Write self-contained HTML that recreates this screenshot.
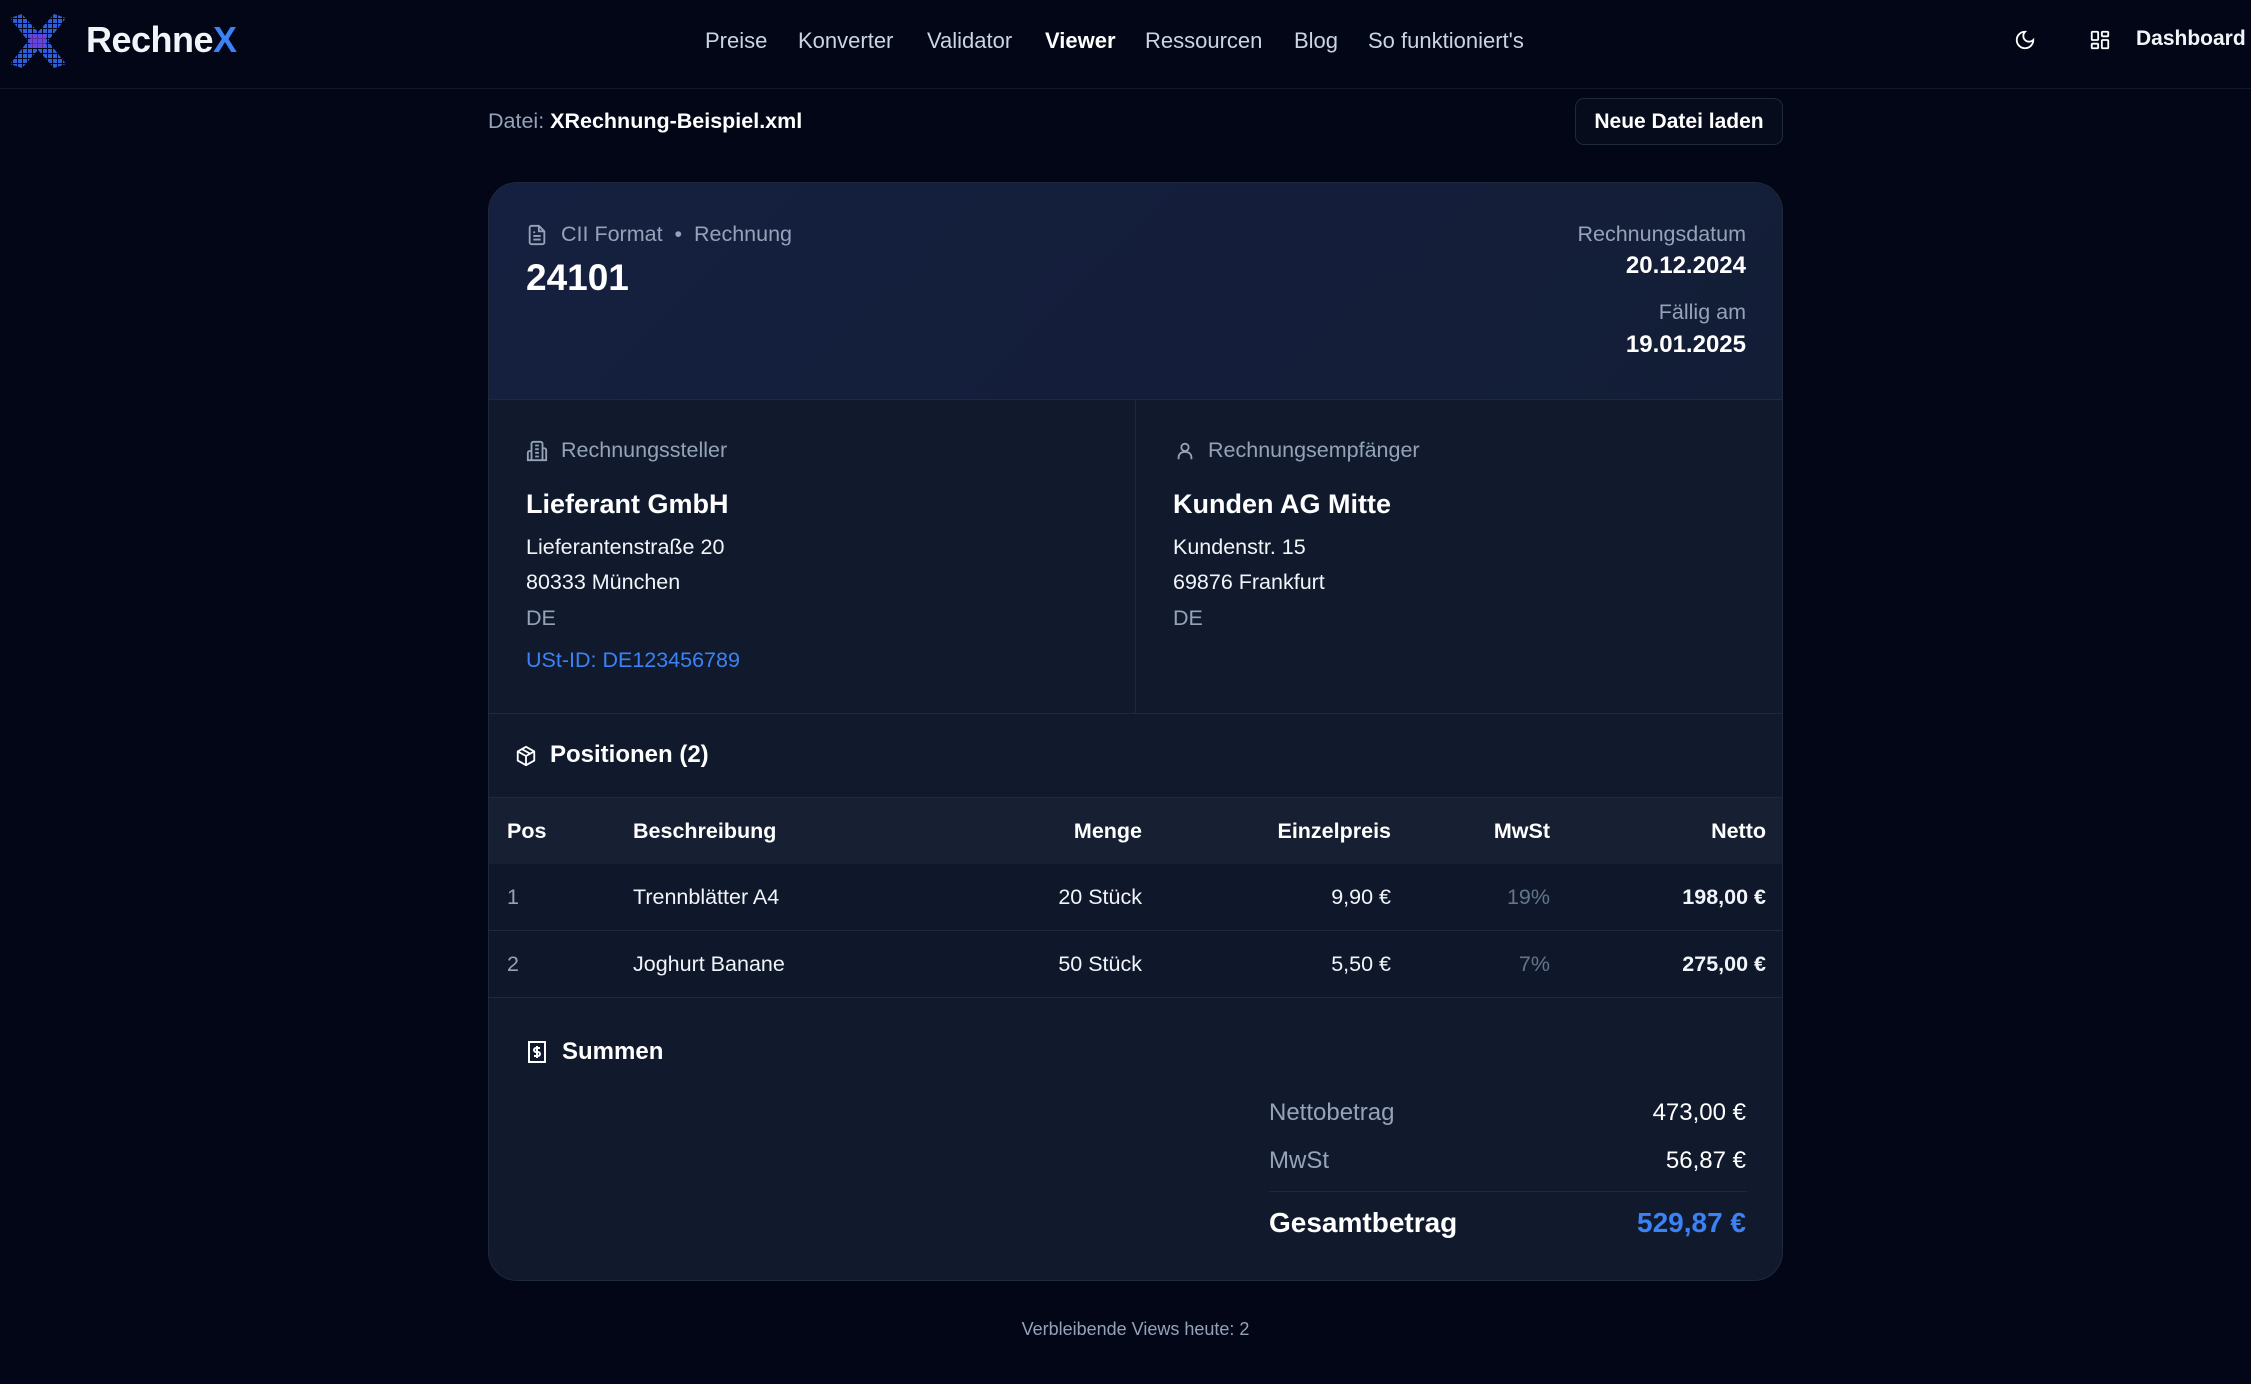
<!DOCTYPE html>
<html><head><meta charset="utf-8"><style>
*{margin:0;padding:0;box-sizing:border-box}
body{width:2251px;height:1384px;background:#020617;font-family:"Liberation Sans",sans-serif;color:#f1f5f9;position:relative;overflow:hidden}
.a{position:absolute;white-space:nowrap}
.nav{position:absolute;left:0;top:0;width:2251px;height:89px;border-bottom:1px solid #111827}
.nl{font-size:22px;color:#cbd5e1;top:28px}
.card{position:absolute;left:488px;top:182px;width:1295px;height:1099px;border:1px solid #1e293b;border-radius:29px;background:#111a2d;overflow:hidden}
.lbl{color:#94a3b8;font-size:21.5px}
.t{font-size:21.5px;color:#f1f5f9}
.r{text-align:right}
</style></head><body>
<div class="nav">
<svg class="a" style="left:8px;top:14px" width="60" height="54" viewBox="0 0 60 54">
<defs><pattern id="p" width="5" height="5" patternUnits="userSpaceOnUse"><rect width="4" height="4" fill="#2f5fd8"/></pattern></defs>
<path d="M2 4 L14 0 L30 18 L46 0 L58 4 L40 27 L58 50 L46 54 L30 36 L14 54 L2 50 L20 27Z" fill="url(#p)"/>
<rect x="22" y="20" width="16" height="14" fill="#7b3fe0" opacity=".7"/>
</svg>
<div class="a" style="left:86px;top:19px;font-size:36px;font-weight:bold;color:#f1f5f9;letter-spacing:-0.5px">Rechne<span style="color:#3b82f6">X</span></div>
<div class="a nl" style="left:705px">Preise</div>
<div class="a nl" style="left:798px">Konverter</div>
<div class="a nl" style="left:927px">Validator</div>
<div class="a nl" style="left:1045px;color:#fff;font-weight:bold">Viewer</div>
<div class="a nl" style="left:1145px">Ressourcen</div>
<div class="a nl" style="left:1294px">Blog</div>
<div class="a nl" style="left:1368px">So funktioniert's</div>
<svg class="a" style="left:2014px;top:29px" width="22" height="22" viewBox="0 0 24 24" fill="none" stroke="#fff" stroke-width="2" stroke-linecap="round"><path d="M12 3a6 6 0 0 0 9 9 9 9 0 1 1-9-9z"/></svg>
<svg class="a" style="left:2089px;top:29px" width="22" height="22" viewBox="0 0 24 24" fill="none" stroke="#fff" stroke-width="2"><rect x="3" y="3" width="7" height="9" rx="1"/><rect x="14" y="3" width="7" height="5" rx="1"/><rect x="14" y="12" width="7" height="9" rx="1"/><rect x="3" y="16" width="7" height="5" rx="1"/></svg>
<div class="a" style="left:2136px;top:27px;font-size:21px;font-weight:bold;color:#f1f5f9">Dashboard</div>
</div>

<div class="a" style="left:488px;top:109px;font-size:21.5px;color:#94a3b8">Datei: <span style="color:#fff;font-weight:bold">XRechnung-Beispiel.xml</span></div>
<div class="a" style="left:1575px;top:98px;width:208px;height:47px;border:1px solid #1e293b;border-radius:9px;background:#060c1c;font-size:21px;font-weight:bold;color:#fff;text-align:center;line-height:45px">Neue Datei laden</div>

<div class="card">
<div class="a" style="left:0;top:0;width:1295px;height:217px;background:linear-gradient(135deg,#152040,#131d36);border-bottom:1px solid #1e293b"></div>
<svg class="a" style="left:37px;top:40px" width="22" height="24" viewBox="0 0 24 24" fill="none" stroke="#94a3b8" stroke-width="2" stroke-linejoin="round"><path d="M14 2H6a2 2 0 0 0-2 2v16a2 2 0 0 0 2 2h12a2 2 0 0 0 2-2V8z"/><path d="M14 2v6h6M8 13h8M8 17h8M8 9h2"/></svg>
<div class="a lbl" style="left:72px;top:39px">CII Format &nbsp;•&nbsp; Rechnung</div>
<div class="a" style="left:37px;top:74px;font-size:37px;font-weight:bold;color:#fff">24101</div>
<div class="a lbl r" style="right:36px;top:39px">Rechnungsdatum</div>
<div class="a r" style="right:36px;top:69px;font-size:24px;font-weight:bold;color:#fff">20.12.2024</div>
<div class="a lbl r" style="right:36px;top:117px">Fällig am</div>
<div class="a r" style="right:36px;top:148px;font-size:24px;font-weight:bold;color:#fff">19.01.2025</div>

<div class="a" style="left:646px;top:217px;width:1px;height:313px;background:#1e293b"></div>
<svg class="a" style="left:37px;top:257px" width="22" height="22" viewBox="0 0 24 24" fill="none" stroke="#94a3b8" stroke-width="2"><path d="M6 22V4a2 2 0 0 1 2-2h8a2 2 0 0 1 2 2v18zM6 12H4a2 2 0 0 0-2 2v8h4M18 9h2a2 2 0 0 1 2 2v11h-4M10 6h4M10 10h4M10 14h4M10 18h4"/></svg>
<div class="a lbl" style="left:72px;top:255px">Rechnungssteller</div>
<div class="a" style="left:37px;top:306px;font-size:27px;font-weight:bold;color:#fff">Lieferant GmbH</div>
<div class="a t" style="left:37px;top:352px">Lieferantenstraße 20</div>
<div class="a t" style="left:37px;top:387px">80333 München</div>
<div class="a lbl" style="left:37px;top:423px">DE</div>
<div class="a" style="left:37px;top:465px;font-size:21.5px;color:#3b82f6">USt-ID: DE123456789</div>

<svg class="a" style="left:685px;top:257px" width="22" height="22" viewBox="0 0 24 24" fill="none" stroke="#94a3b8" stroke-width="2"><circle cx="12" cy="8" r="4"/><path d="M5 21v-2a6 6 0 0 1 6-6h2a6 6 0 0 1 6 6v2"/></svg>
<div class="a lbl" style="left:719px;top:255px">Rechnungsempfänger</div>
<div class="a" style="left:684px;top:306px;font-size:27px;font-weight:bold;color:#fff">Kunden AG Mitte</div>
<div class="a t" style="left:684px;top:352px">Kundenstr. 15</div>
<div class="a t" style="left:684px;top:387px">69876 Frankfurt</div>
<div class="a lbl" style="left:684px;top:423px">DE</div>

<div class="a" style="left:0;top:530px;width:1295px;height:85px;border-top:1px solid #1e293b;border-bottom:1px solid #1e293b;background:#111a2d"></div>
<svg class="a" style="left:26px;top:561px" width="22" height="24" viewBox="0 0 24 24" fill="none" stroke="#fff" stroke-width="2" stroke-linejoin="round"><path d="M12 2l9 5v10l-9 5-9-5V7z"/><path d="M3 7l9 5 9-5M12 12v10M7.5 4.5l9 5"/></svg>
<div class="a" style="left:61px;top:558px;font-size:24px;font-weight:bold;color:#fff">Positionen (2)</div>

<div class="a" style="left:0;top:615px;width:1295px;height:66px;background:#172032"></div>
<div class="a" style="left:0;top:681px;width:1295px;height:133px;background:#0f172a"></div>
<div class="a" style="left:0;top:747px;width:1295px;height:1px;background:#1e293b"></div>
<div class="a" style="left:0;top:814px;width:1295px;height:1px;background:#1e293b"></div>
<div style="position:absolute;left:0;top:636px;width:1295px;font-size:21.5px;font-weight:bold;color:#fff">
<span class="a" style="left:18px">Pos</span><span class="a" style="left:144px">Beschreibung</span><span class="a r" style="right:642px">Menge</span><span class="a r" style="right:393px">Einzelpreis</span><span class="a r" style="right:234px">MwSt</span><span class="a r" style="right:18px">Netto</span></div>
<div style="position:absolute;left:0;top:702px;width:1295px;font-size:21.5px;color:#f1f5f9">
<span class="a" style="left:18px;color:#94a3b8">1</span><span class="a" style="left:144px">Trennblätter A4</span><span class="a" style="right:642px">20 Stück</span><span class="a" style="right:393px">9,90 €</span><span class="a" style="right:234px;color:#64748b">19%</span><span class="a" style="right:18px;font-weight:bold">198,00 €</span></div>
<div style="position:absolute;left:0;top:769px;width:1295px;font-size:21.5px;color:#f1f5f9">
<span class="a" style="left:18px;color:#94a3b8">2</span><span class="a" style="left:144px">Joghurt Banane</span><span class="a" style="right:642px">50 Stück</span><span class="a" style="right:393px">5,50 €</span><span class="a" style="right:234px;color:#64748b">7%</span><span class="a" style="right:18px;font-weight:bold">275,00 €</span></div>

<svg class="a" style="left:38px;top:858px" width="20" height="22" viewBox="0 0 20 22" fill="none" stroke="#fff" stroke-width="2"><rect x="2" y="1" width="16" height="20"/><path d="M13 7h-4a2 2 0 0 0 0 4h2a2 2 0 0 1 0 4H7M10 5v12"/></svg>
<div class="a" style="left:73px;top:855px;font-size:24px;font-weight:bold;color:#fff">Summen</div>
<div class="a" style="left:780px;top:916px;font-size:24px;color:#94a3b8">Nettobetrag</div>
<div class="a r" style="right:36px;top:916px;font-size:24px;color:#fff">473,00 €</div>
<div class="a" style="left:780px;top:964px;font-size:24px;color:#94a3b8">MwSt</div>
<div class="a r" style="right:36px;top:964px;font-size:24px;color:#fff">56,87 €</div>
<div class="a" style="left:780px;top:1008px;width:478px;height:1px;background:#1e293b"></div>
<div class="a" style="left:780px;top:1024px;font-size:28px;font-weight:bold;color:#fff">Gesamtbetrag</div>
<div class="a r" style="right:36px;top:1024px;font-size:28px;font-weight:bold;color:#3b82f6">529,87 €</div>
</div>

<div class="a" style="left:0;width:2271px;top:1319px;text-align:center;font-size:18px;color:#94a3b8">Verbleibende Views heute: 2</div>
</body></html>
